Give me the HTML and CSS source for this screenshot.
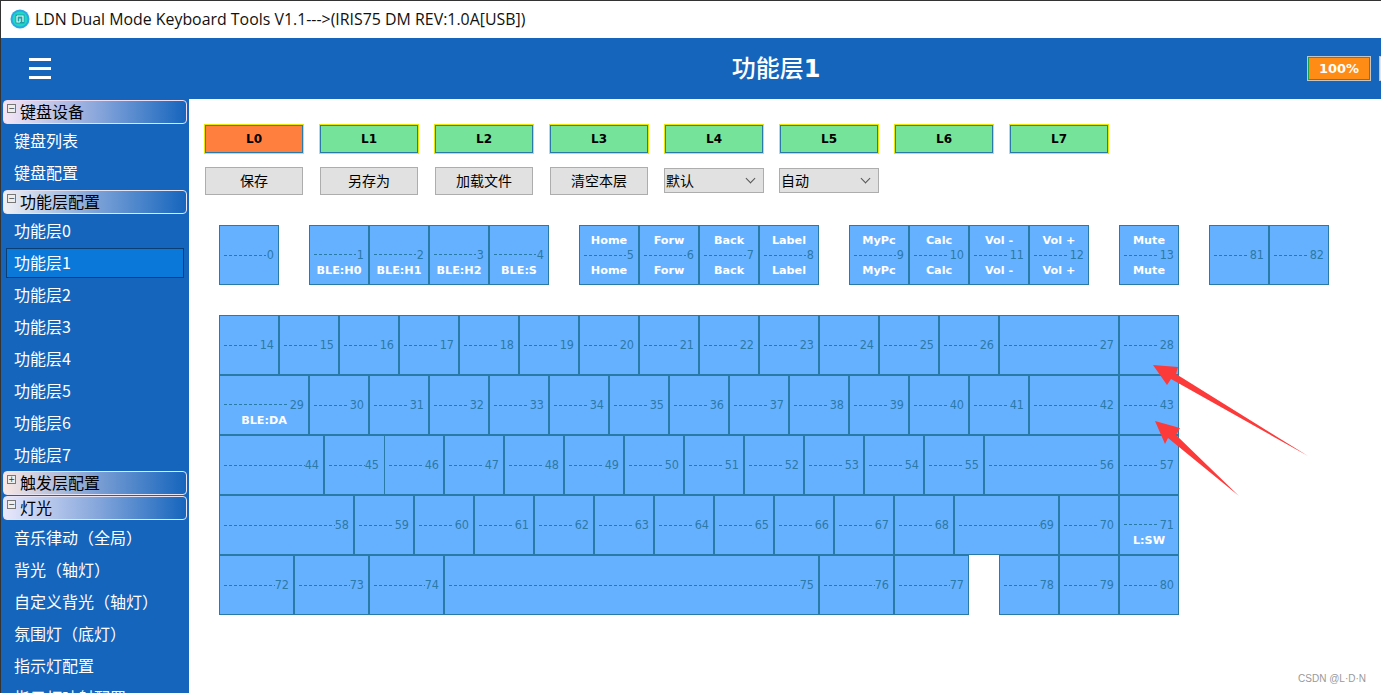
FILE: index.html
```html
<!DOCTYPE html>
<html lang="zh">
<head>
<meta charset="utf-8">
<title>LDN Dual Mode Keyboard Tools</title>
<link rel="stylesheet" href="styles.css">
</head>
<body>
<div class="app">
  <div class="titlebar">
    <svg class="appicon" viewBox="0 0 20 20" width="20" height="20"><circle cx="10" cy="10" r="9.5" fill="#2aa8e4"/><circle cx="10" cy="10" r="7.5" fill="#20d6c4"/><path d="M5.5 5.5h9v9h-9z" fill="#1aa0a8"/><path d="M7 7h6v6M7 7v6h3M10 9.5v3.5" fill="none" stroke="#e8fffa" stroke-width="1.2"/></svg>
    <span>LDN Dual Mode Keyboard Tools V1.1---&gt;(IRIS75 DM REV:1.0A[USB])</span>
  </div>
  <header class="topbar">
    <div class="burger"><i></i><i></i><i></i></div>
    <h1 class="pagetitle">功能层<b>1</b></h1>
    <div class="battery">100%</div>
    <div class="edgebtn"></div>
  </header>
  <div class="body">
    <nav class="side">
      <div class="sec sec-pink"><span class="tog">−</span>键盘设备</div>
      <a class="item">键盘列表</a>
      <a class="item">键盘配置</a>
      <div class="sec sec-second"><span class="tog">−</span>功能层配置</div>
      <a class="item">功能层0</a>
      <a class="item sel">功能层1</a>
      <a class="item">功能层2</a>
      <a class="item">功能层3</a>
      <a class="item">功能层4</a>
      <a class="item">功能层5</a>
      <a class="item">功能层6</a>
      <a class="item item-short">功能层7</a>
      <div class="sec sec-peach"><span class="tog">+</span>触发层配置</div>
      <div class="sec sec-lilac"><span class="tog">−</span>灯光</div>
      <a class="item">音乐律动（全局）</a>
      <a class="item">背光（轴灯）</a>
      <a class="item">自定义背光（轴灯）</a>
      <a class="item">氛围灯（底灯）</a>
      <a class="item">指示灯配置</a>
      <a class="item">指示灯映射配置</a>
    </nav>
    <main class="content">
      <div class="layers">
        <button class="layer on">L0</button>
        <button class="layer">L1</button>
        <button class="layer">L2</button>
        <button class="layer">L3</button>
        <button class="layer">L4</button>
        <button class="layer">L5</button>
        <button class="layer">L6</button>
        <button class="layer">L7</button>
      </div>
      <div class="actions">
        <button class="act">保存</button>
        <button class="act">另存为</button>
        <button class="act">加载文件</button>
        <button class="act">清空本层</button>
        <div class="pickwrap"><select class="pick"><option>默认</option></select></div>
        <div class="pickwrap"><select class="pick"><option>自动</option></select></div>
      </div>
      <div class="fnrow">
        <div class="group"><div class="key"><em></em><span class="mid"><u></u>0</span><em></em></div></div>
        <div class="group">
          <div class="key"><em></em><span class="mid"><u></u>1</span><em>BLE:H0</em></div>
          <div class="key"><em></em><span class="mid"><u></u>2</span><em>BLE:H1</em></div>
          <div class="key"><em></em><span class="mid"><u></u>3</span><em>BLE:H2</em></div>
          <div class="key"><em></em><span class="mid"><u></u>4</span><em>BLE:S</em></div>
        </div>
        <div class="group">
          <div class="key"><em>Home</em><span class="mid"><u></u>5</span><em>Home</em></div>
          <div class="key"><em>Forw</em><span class="mid"><u></u>6</span><em>Forw</em></div>
          <div class="key"><em>Back</em><span class="mid"><u></u>7</span><em>Back</em></div>
          <div class="key"><em>Label</em><span class="mid"><u></u>8</span><em>Label</em></div>
        </div>
        <div class="group">
          <div class="key"><em>MyPc</em><span class="mid"><u></u>9</span><em>MyPc</em></div>
          <div class="key"><em>Calc</em><span class="mid"><u></u>10</span><em>Calc</em></div>
          <div class="key"><em>Vol -</em><span class="mid"><u></u>11</span><em>Vol -</em></div>
          <div class="key"><em>Vol +</em><span class="mid"><u></u>12</span><em>Vol +</em></div>
        </div>
        <div class="group"><div class="key"><em>Mute</em><span class="mid"><u></u>13</span><em>Mute</em></div></div>
        <div class="group">
          <div class="key"><em></em><span class="mid"><u></u>81</span><em></em></div>
          <div class="key"><em></em><span class="mid"><u></u>82</span><em></em></div>
        </div>
      </div>
      <div class="board" id="board"></div>
    </main>
  </div>
</div>
<svg class="arrows" viewBox="0 0 1381 693" width="1381" height="693">
  <polygon points="1153,365 1178,367 1176,374 1308,456 1171,379 1167,385" fill="#fd3a3a"/>
  <polygon points="1155,421 1180,428 1176,435 1239,496 1168,438 1165,444" fill="#fd3a3a"/>
</svg>
<div class="mark">CSDN @L·D·N</div>
<script src="board.js"></script>
</body>
</html>
```
FILE: board.js
```js
var rows = [
  [[14,60],[15,60],[16,60],[17,60],[18,60],[19,60],[20,60],[21,60],[22,60],[23,60],[24,60],[25,60],[26,60],[27,120],[28,60]],
  [[29,90,'BLE:DA'],[30,60],[31,60],[32,60],[33,60],[34,60],[35,60],[36,60],[37,60],[38,60],[39,60],[40,60],[41,60],[42,90],[43,60]],
  [[44,105],[45,60],[46,60],[47,60],[48,60],[49,60],[50,60],[51,60],[52,60],[53,60],[54,60],[55,60],[56,135],[57,60]],
  [[58,135],[59,60],[60,60],[61,60],[62,60],[63,60],[64,60],[65,60],[66,60],[67,60],[68,60],[69,105],[70,60],[71,60,'L:SW']],
  [[72,75],[73,75],[74,75],[75,375],[76,75],[77,75],[0,30],[78,60],[79,60],[80,60]]
];
var tight = [44,45,58,69,72,73,74,75,76,77];
var board = document.getElementById('board');
rows.forEach(function (row) {
  var r = document.createElement('div');
  r.className = 'row';
  row.forEach(function (k) {
    var d = document.createElement('div');
    d.style.width = k[1] + 'px';
    if (!k[0]) { d.className = 'gap'; r.appendChild(d); return; }
    d.className = 'key' + (tight.indexOf(k[0]) >= 0 ? ' tight' : '') + (k[0] === 45 ? ' noright' : '');
    d.innerHTML = '<em></em><span class="mid"><u></u>' + k[0] + '</span><em>' + (k[2] || '') + '</em>';
    r.appendChild(d);
  });
  board.appendChild(r);
});
```
FILE: styles.css
```css
* { box-sizing: border-box; }
html, body { margin: 0; height: 693px; overflow: hidden; background: #fff; }
body { position: relative; font-family: "Noto Sans CJK SC", "Noto Sans", sans-serif; }
.app { width: 1381px; height: 693px; display: flex; flex-direction: column; border-left: 1px solid #333; }
.titlebar { height: 38px; flex: none; display: flex; align-items: center; gap: 5px; padding: 0 0 2px 9px; border-top: 1px solid #333; font-family: "Open Sans", "Noto Sans CJK SC", sans-serif; font-size: 15.9px; color: #111; white-space: nowrap; }
.topbar { height: 61px; flex: none; background: #1565bd; display: flex; align-items: center; position: relative; }
.burger { margin-left: 28px; width: 22px; display: flex; flex-direction: column; gap: 6px; }
.burger i { display: block; height: 3px; background: #fff; }
.pagetitle { position: absolute; left: 188px; right: 18px; top: 12px; margin: 0; text-align: center; color: #fff; font-size: 24px; font-weight: 500; line-height: 34px; }
.pagetitle b { font-family: "DejaVu Sans", sans-serif; font-weight: 700; }
.battery { position: absolute; left: 1306px; top: 18px; width: 64px; height: 25px; border: 1px solid #c4c4c4; outline: 1px solid #1fa24a; outline-offset: -2px; background: #ff8c14; color: #fff; font: 700 13px/23px "DejaVu Sans", sans-serif; text-align: center; }
.edgebtn { position: absolute; left: 1378px; top: 18px; width: 10px; height: 25px; background: #e6e6e6; border: 1px solid #c4c4c4; }
.body { flex: 1; display: flex; min-height: 0; }
.side { width: 188px; flex: none; background: #1565bd; overflow: hidden; padding: 1px 2px 0 2px; }
.sec { height: 24px; margin-bottom: 1px; border: 1px solid #e8e4f4; border-radius: 4px; background: linear-gradient(90deg, #f1f1f4 0%, #7ea3d8 50%, #1565bd 100%); color: #000; font-size: 16px; line-height: 20px; padding-left: 16px; position: relative; white-space: nowrap; }
.sec-second { margin-top: 1px; }
.sec-pink { background: linear-gradient(90deg, #f6e6f6 0%, #8ca8dc 50%, #1565bd 100%); border-color: #f0dcf4; }
.sec-peach { background: linear-gradient(90deg, #fbe8e4 0%, #7ea0d4 50%, #1565bd 100%); }
.sec-lilac { background: linear-gradient(90deg, #e8e8fc 0%, #88a8dc 50%, #1565bd 100%); margin-bottom: 2px; }
.tog { position: absolute; left: 3px; top: 3px; width: 9px; height: 9px; border: 1px solid #777; background: #eee; color: #333; font: 8px/7px "DejaVu Sans", sans-serif; text-align: center; }
.item { display: block; height: 32px; line-height: 30px; padding-left: 11px; color: #fff; font-size: 16px; white-space: nowrap; }
.item-short { line-height: 30px; }
.item.sel { height: 30px; line-height: 27px; margin: 1px 3px; padding-left: 7px; background: #0a78d8; border: 1px solid #0b3f74; }
.content { flex: 1; min-width: 0; padding: 25px 0 0 15px; }
.layers { display: flex; gap: 17px; padding: 1px 0 0 1px; }
.layer { width: 98px; height: 28px; padding: 0; background: #76e39a; border: 1px solid #2a7aa8; outline: 1px solid #e8e800; margin: 0; font: 700 12px/1 "DejaVu Sans", sans-serif; color: #000; }
.layer.on { background: #ff7f3f; }
.actions { display: flex; gap: 17px; margin: 14px 0 0 1px; align-items: flex-start; }
.act { width: 98px; height: 28px; padding: 0 0 2px; background: #e1e1e1; border: 1px solid #adadad; color: #000; font: 14px/1 "Noto Sans CJK SC", sans-serif; }
.pickwrap { position: relative; width: 100px; height: 25px; margin: 1px -1px 0 -1px; }
.pickwrap + .pickwrap { margin-left: -1px; }
.pickwrap::after { content: ""; position: absolute; right: 10px; top: 7px; width: 6px; height: 6px; border-right: 1px solid #555; border-bottom: 1px solid #555; transform: rotate(45deg); pointer-events: none; }
.pick { display: block; width: 100%; height: 100%; appearance: none; -webkit-appearance: none; border-radius: 0; padding: 0 0 2px 1px; background: #e1e1e1; border: 1px solid #adadad; color: #000; font: 14px "Noto Sans CJK SC", sans-serif; }
.fnrow { display: flex; gap: 30px; margin: 30px 0 0 15px; }
.group { display: flex; }
.key { width: 60px; height: 60px; flex: none; background: #66b1ff; border: 1px solid #2a7aa8; display: flex; flex-direction: column; align-items: stretch; padding: 8px 4px; }
.key em { flex: 1; font: 700 11.2px/1 "DejaVu Sans", sans-serif; color: #fff; text-align: center; display: flex; align-items: center; justify-content: center; white-space: nowrap; padding-top: 1px; }
.mid { height: 18px; flex: none; display: flex; align-items: center; font: 12.5px/1 "DejaVu Sans Condensed", "DejaVu Sans", sans-serif; color: #2a7aa8; gap: 3px; }
.mid u { flex: 1; height: 1px; background: repeating-linear-gradient(90deg, #2a7aa8 0 3px, transparent 3px 5px); text-decoration: none; }
.fnrow .mid { gap: 1px; }
.key.tight .mid { gap: 0; }
.key.noright { border-right: 0; padding-right: 5px; }
.board { margin: 30px 0 0 15px; }
.row { display: flex; height: 60px; }
.gap { flex: none; }
.arrows { position: absolute; left: 0; top: 0; pointer-events: none; }
.mark { position: absolute; right: 15px; top: 672px; color: #999; font: 10px/14px "Liberation Sans", sans-serif; }
```
